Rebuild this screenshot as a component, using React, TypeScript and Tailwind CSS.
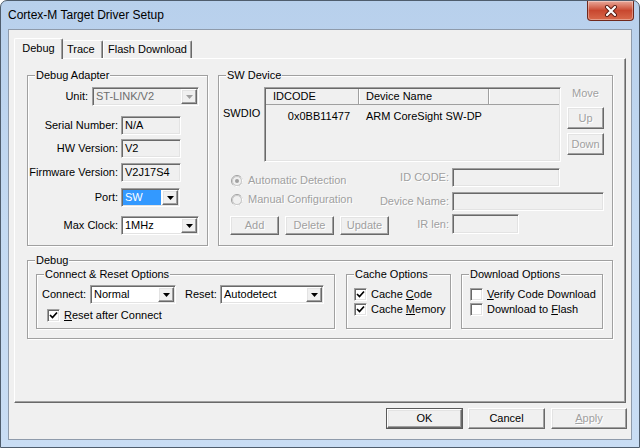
import React from "react";

const sunken =
  "border border-t-[#a0a0a0] border-l-[#a0a0a0] border-b-white border-r-white shadow-[inset_1px_1px_0_#696969,inset_-1px_-1px_0_#e3e3e3]";
const raised =
  "border border-t-white border-l-white border-b-[#696969] border-r-[#696969] shadow-[inset_-1px_-1px_0_#a0a0a0,inset_1px_1px_0_#e3e3e3] bg-[#f0f0f0]";
const dis = "text-[#a0a0a0] [text-shadow:1px_1px_0_#fff]";

function Tri({ gray }: { gray?: boolean }) {
  return (
    <svg width="7" height="4" viewBox="0 0 7 4">
      <polygon points="0,0 7,0 3.5,4" fill={gray ? "#a0a0a0" : "#000"} />
    </svg>
  );
}

function Combo({
  className,
  text,
  disabled,
  highlight,
}: {
  className: string;
  text: string;
  disabled?: boolean;
  highlight?: boolean;
}) {
  return (
    <div
      className={`${sunken} ${className} h-[19px] flex items-stretch ${
        disabled ? "bg-[#f0f0f0]" : "bg-white"
      }`}
    >
      {highlight ? (
        <div className="flex-1 m-[1px] bg-[#3399ff] text-white flex items-center pl-[2px] leading-[13px]">
          {text}
        </div>
      ) : (
        <div
          className={`flex-1 flex items-center pl-[3px] leading-[13px] ${
            disabled ? "text-[#6d6d6d]" : ""
          }`}
        >
          {text}
        </div>
      )}
      <div className={`${raised} w-[16px] my-[1px] mr-[1px] flex items-center justify-center`}>
        <Tri gray={disabled} />
      </div>
    </div>
  );
}

function Field({ className, text }: { className: string; text?: string }) {
  return (
    <div className={`${sunken} ${className} bg-[#f0f0f0] flex items-center pl-[3px] leading-[13px]`}>
      {text}
    </div>
  );
}

function Group({
  title,
  className,
  children,
}: {
  title: string;
  className: string;
  children?: React.ReactNode;
}) {
  return (
    <div
      className={`flex flex-col shrink-0 border border-[#a0a0a0] shadow-[inset_1px_1px_0_#fff,1px_1px_0_#fff] ${className}`}
    >
      <div className="self-start -mt-[7px] ml-[7px] px-[1px] bg-[#f0f0f0] leading-[13px] h-[13px] whitespace-nowrap">
        {title}
      </div>
      {children}
    </div>
  );
}

function Btn({
  className,
  children,
  disabled,
}: {
  className: string;
  children: React.ReactNode;
  disabled?: boolean;
}) {
  return (
    <div
      className={`${raised} ${className} flex items-center justify-center leading-[13px] shrink-0 ${
        disabled ? dis : ""
      }`}
    >
      {children}
    </div>
  );
}

function Check({ checked }: { checked?: boolean }) {
  return (
    <div className={`${sunken} bg-white w-[13px] h-[13px] shrink-0 flex items-center justify-center`}>
      {checked && (
        <svg width="9" height="9" viewBox="0 0 9 9">
          <path d="M1 4 L3.5 6.5 L8 1.5" stroke="#000" strokeWidth="1.7" fill="none" />
        </svg>
      )}
    </div>
  );
}

function CheckRow({
  checked,
  children,
  className,
}: {
  checked?: boolean;
  children: React.ReactNode;
  className: string;
}) {
  return (
    <div className={`flex items-center h-[13px] ${className}`}>
      <Check checked={checked} />
      <div className="ml-[4px] leading-[13px] whitespace-nowrap">{children}</div>
    </div>
  );
}

function Radio({ checked }: { checked?: boolean }) {
  return (
    <svg width="12" height="12" viewBox="0 0 12 12" className="shrink-0">
      <circle cx="6" cy="6" r="5.5" fill="#f0f0f0" stroke="#a0a0a0" />
      <path d="M10 2.2 A5.5 5.5 0 0 1 2.2 10" stroke="#fff" fill="none" />
      <circle cx="6" cy="6" r="4.5" fill="none" stroke="#c8c8c8" />
      {checked && <circle cx="6" cy="6" r="2" fill="#a0a0a0" />}
    </svg>
  );
}

export default function App() {
  return (
    <div className="w-[640px] h-[448px] bg-white font-['Liberation_Sans',Arial,sans-serif] text-[11px] text-black">
      <div className="w-[640px] h-[448px] rounded-t-[7px] border border-[#4f5d6d] bg-gradient-to-b from-[#b8d0ec] via-[#c4daf2] to-[#c9ddf4] flex flex-col overflow-hidden">
        {/* Title bar */}
        <div className="h-[28px] flex items-start shrink-0">
          <div className="ml-[7px] mt-[6px] text-[12px] leading-[16px] text-black whitespace-nowrap">
            Cortex-M Target Driver Setup
          </div>
          <div className="ml-auto mr-[5px] w-[47px] h-[20px] rounded-b-[4px] border border-t-0 border-[#70281c] bg-gradient-to-b from-[#e8a89a] via-[#c8472f] to-[#d8694b] flex items-center justify-center shadow-[inset_0_0_0_1px_rgba(255,255,255,0.35)]">
            <svg width="14" height="12" viewBox="0 0 14 12">
              <path d="M3 2 L11 10 M11 2 L3 10" stroke="#5a1d14" strokeWidth="4" strokeLinecap="round" />
              <path d="M3 2 L11 10 M11 2 L3 10" stroke="#fff" strokeWidth="2.2" strokeLinecap="round" />
            </svg>
          </div>
        </div>

        {/* Client area */}
        <div className="mx-[7px] h-[411px] shrink-0 border border-[#8f9bab] bg-[#f0f0f0] flex flex-col">
          {/* Tabs */}
          <div className="flex items-end ml-[5px] mt-[8px] h-[20px]">
            <div className="relative z-10 -mb-[1px] h-[21px] w-[49px] rounded-t-[2px] bg-[#f0f0f0] border-l border-t border-white border-r border-r-[#696969] shadow-[inset_-1px_0_0_#a0a0a0] flex items-center justify-center pb-[2px]">
              Debug
            </div>
            <div className="h-[18px] w-[40px] rounded-t-[2px] bg-[#f0f0f0] border-t border-white border-r border-r-[#696969] shadow-[inset_-1px_0_0_#a0a0a0] flex items-center pl-[4px]">
              Trace
            </div>
            <div className="h-[18px] w-[89px] rounded-t-[2px] bg-[#f0f0f0] border-t border-l border-white border-r border-r-[#696969] shadow-[inset_-1px_0_0_#a0a0a0] flex items-center justify-center">
              Flash Download
            </div>
          </div>

          {/* Panel */}
          <div className="ml-[5px] w-[612px] h-[345px] border border-t-white border-l-white border-b-[#696969] border-r-[#696969] shadow-[inset_-1px_-1px_0_#a0a0a0] flex flex-col">
            <div className="flex mt-[16px] ml-[12px]">
              {/* Debug Adapter */}
              <Group title="Debug Adapter" className="w-[181px] h-[171px]">
                <div className="mt-[5px] flex items-center h-[19px]">
                  <div className="w-[60px] text-right">Unit:</div>
                  <Combo className="ml-[4px] w-[107px]" text="ST-LINK/V2" disabled />
                </div>
                <div className="mt-[10px] flex items-center h-[19px]">
                  <div className="w-[90px] text-right whitespace-nowrap">Serial Number:</div>
                  <Field className="ml-[3px] w-[60px] h-[19px]" text="N/A" />
                </div>
                <div className="mt-[4px] flex items-center h-[19px]">
                  <div className="w-[90px] text-right whitespace-nowrap">HW Version:</div>
                  <Field className="ml-[3px] w-[60px] h-[19px]" text="V2" />
                </div>
                <div className="mt-[5px] flex items-center h-[19px]">
                  <div className="w-[90px] text-right whitespace-nowrap">Firmware Version:</div>
                  <Field className="ml-[3px] w-[60px] h-[19px]" text="V2J17S4" />
                </div>
                <div className="mt-[6px] flex items-center h-[19px]">
                  <div className="w-[90px] text-right">Port:</div>
                  <Combo className="ml-[3px] w-[59px]" text="SW" highlight />
                </div>
                <div className="mt-[9px] flex items-center h-[19px]">
                  <div className="w-[90px] text-right whitespace-nowrap">Max Clock:</div>
                  <Combo className="ml-[3px] w-[78px]" text="1MHz" />
                </div>
              </Group>

              {/* SW Device */}
              <Group title="SW Device" className="ml-[10px] w-[395px] h-[171px]">
                <div className="mt-[5px] flex items-start">
                  <div className="ml-[4px] w-[41px] mt-[20px] leading-[13px]">SWDIO</div>
                  <div className={`${sunken} w-[297px] h-[75px] bg-[#f0f0f0] flex flex-col p-[1px]`}>
                    <div className="flex h-[16px] border-b border-[#a0a0a0] shrink-0">
                      <div className="w-[93px] border-r border-[#a0a0a0] shadow-[1px_0_0_#fff] pl-[7px] flex items-center">
                        IDCODE
                      </div>
                      <div className="w-[130px] border-r border-[#a0a0a0] shadow-[1px_0_0_#fff] pl-[7px] flex items-center whitespace-nowrap">
                        Device Name
                      </div>
                      <div className="flex-1" />
                    </div>
                    <div className="flex mt-[5px] h-[13px] leading-[13px]">
                      <div className="w-[93px] text-right pr-[9px]">0x0BB11477</div>
                      <div className="pl-[7px] whitespace-nowrap">ARM CoreSight SW-DP</div>
                    </div>
                  </div>
                  <div className="ml-[6px] w-[37px] flex flex-col items-center">
                    <div className={`leading-[13px] ${dis}`}>Move</div>
                    <Btn className="mt-[7px] w-[37px] h-[22px]" disabled>
                      Up
                    </Btn>
                    <Btn className="mt-[4px] w-[37px] h-[22px]" disabled>
                      Down
                    </Btn>
                  </div>
                </div>

                <div className="mt-[6px] flex items-start h-[19px]">
                  <div className="w-[233px] h-[19px] flex items-start shrink-0">
                    <div className="pl-[12px] mt-[6px] flex items-center h-[13px]">
                      <Radio checked />
                      <span className={`ml-[5px] leading-[13px] whitespace-nowrap ${dis}`}>Automatic Detection</span>
                    </div>
                    <div className={`ml-auto pr-[3px] self-center ${dis}`}>ID CODE:</div>
                  </div>
                  <Field className="w-[108px] h-[19px]" />
                </div>
                <div className="mt-[5px] flex items-start h-[19px]">
                  <div className="w-[233px] h-[19px] flex items-start shrink-0">
                    <div className="pl-[12px] mt-[1px] flex items-center h-[13px]">
                      <Radio />
                      <span className={`ml-[5px] leading-[13px] whitespace-nowrap ${dis}`}>Manual Configuration</span>
                    </div>
                    <div className={`ml-auto pr-[3px] self-center whitespace-nowrap ${dis}`}>Device Name:</div>
                  </div>
                  <Field className="w-[152px] h-[19px]" />
                </div>
                <div className="mt-[3px] flex items-start h-[20px]">
                  <div className="w-[233px] h-[20px] flex items-start shrink-0">
                    <div className="pl-[11px] mt-[2px] flex">
                      <Btn className="w-[49px] h-[19px]" disabled>
                        Add
                      </Btn>
                      <Btn className="ml-[6px] w-[49px] h-[19px]" disabled>
                        Delete
                      </Btn>
                      <Btn className="ml-[6px] w-[49px] h-[19px]" disabled>
                        Update
                      </Btn>
                    </div>
                    <div className={`ml-auto pr-[3px] self-center whitespace-nowrap ${dis}`}>IR len:</div>
                  </div>
                  <Field className="w-[67px] h-[20px]" />
                </div>
              </Group>
            </div>

            {/* Debug group */}
            <Group title="Debug" className="mt-[14px] ml-[12px] w-[586px] h-[79px]">
              <div className="mt-[7px] ml-[8px] flex items-start">
                <Group title="Connect & Reset Options" className="w-[299px] h-[55px]">
                  <div className="mt-[4px] pl-[5px] flex items-center h-[19px]">
                    <div className="w-[48px]">Connect:</div>
                    <Combo className="w-[86px]" text="Normal" />
                    <div className="ml-[9px] w-[35px]">Reset:</div>
                    <Combo className="w-[104px]" text="Autodetect" />
                  </div>
                  <CheckRow checked className="mt-[5px] pl-[10px]">
                    <span className="underline">R</span>eset after Connect
                  </CheckRow>
                </Group>
                <Group title="Cache Options" className="ml-[11px] w-[105px] h-[55px]">
                  <CheckRow checked className="mt-[7px] pl-[7px]">
                    Cache <span className="underline">C</span>ode
                  </CheckRow>
                  <CheckRow checked className="mt-[2px] pl-[7px]">
                    Cache <span className="underline">M</span>emory
                  </CheckRow>
                </Group>
                <Group title="Download Options" className="ml-[10px] w-[142px] h-[55px]">
                  <CheckRow className="mt-[7px] pl-[8px]">
                    <span className="underline">V</span>erify Code Download
                  </CheckRow>
                  <CheckRow className="mt-[2px] pl-[8px]">
                    Download to <span className="underline">F</span>lash
                  </CheckRow>
                </Group>
              </div>
            </Group>
          </div>

          {/* Bottom buttons */}
          <div className="mt-[5px] ml-[377px] flex">
            <div className="w-[77px] h-[21px] border border-[#5a5a5a] flex shrink-0">
              <Btn className="flex-1 h-full">OK</Btn>
            </div>
            <Btn className="ml-[5px] w-[77px] h-[21px]">Cancel</Btn>
            <Btn className="ml-[6px] w-[76px] h-[21px]" disabled>
              <span className="underline">A</span>pply
            </Btn>
          </div>
        </div>
      </div>
    </div>
  );
}
